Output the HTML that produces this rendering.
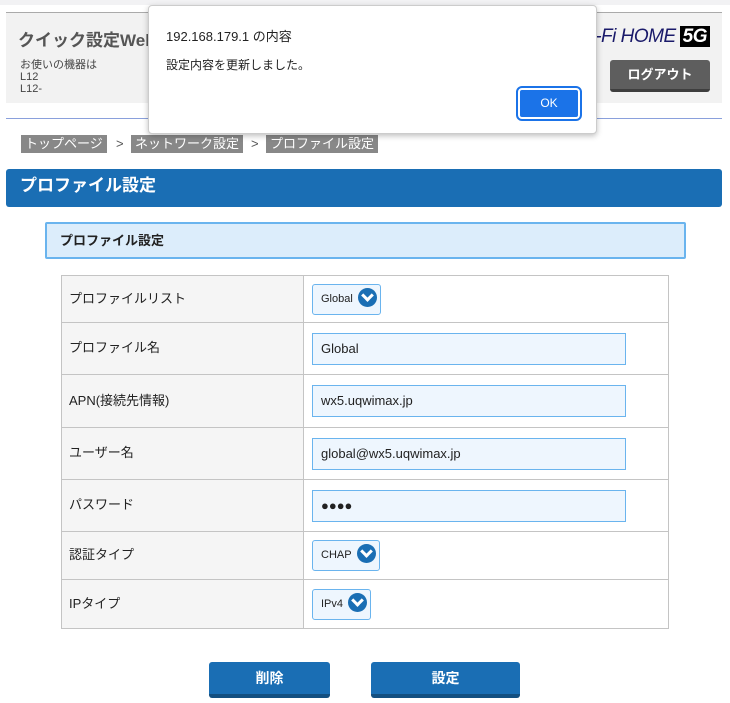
<!DOCTYPE html>
<html><head><meta charset="utf-8"><style>
*{box-sizing:border-box;margin:0;padding:0}
body{width:730px;height:703px;overflow:hidden;background:#fff;font-family:"Liberation Sans","Noto Sans CJK JP",sans-serif;position:relative;color:#222}
.top{position:absolute;left:0;top:0;width:730px;height:5px;background:#f2f2f4}
.hdr{position:absolute;left:6px;top:12px;width:716px;height:91px;background:#f2f2f2;border-top:1px solid #aaa}
.hdr .t{position:absolute;left:12px;top:13px;font-size:17px;font-weight:bold;color:#555}
.hdr .s{position:absolute;left:14px;top:46px;font-size:11px;line-height:12px;color:#444}
.logo{position:absolute;right:12px;top:13px;font-size:19px;font-style:italic;color:#1a1a6a;letter-spacing:-0.5px;white-space:nowrap}
.logo b{background:#000;color:#fff;padding:0 3px;margin-left:4px}
.lo{position:absolute;left:604px;top:47px;width:100px;height:32px;background:#5e5e5e;border-bottom:3px solid #3e3e3e;border-radius:3px;color:#fff;font-size:13px;font-weight:bold;text-align:center;line-height:30px}
.bl{position:absolute;left:6px;top:118px;width:716px;height:1px;background:#8aa0dc}
.bc{position:absolute;top:135px;height:18px;background:#888;color:#fff;font-size:13px;line-height:18px;padding:0 4px}
.gt{position:absolute;top:135px;font-size:13px;line-height:18px;color:#555}
.ttl{position:absolute;left:6px;top:169px;width:716px;height:38px;background:#1a6eb4;border-radius:3px;color:#fff;font-size:17px;font-weight:bold;line-height:34px;padding-left:14px}
.sec{position:absolute;left:45px;top:222px;width:641px;height:37px;background:#dcedfb;border:2px solid #6ab4ee;border-radius:2px;font-size:13px;font-weight:bold;line-height:33px;padding-left:13px}
table{position:absolute;left:61px;top:275px;width:608px;border-collapse:collapse}
td{border:1px solid #c4c4c4;font-size:13px;vertical-align:middle}
td.l{width:242px;background:#f5f5f5;padding:0 0 4px 7px}
td.r{padding-left:8px}
.in{width:314px;height:32px;background:#eef6fe;border:1px solid #6ab4ee;font-size:13px;line-height:30px;padding-left:8px}
.sel{display:inline-block;height:31px;background:#eef6fe;border:1px solid #6ab4ee;border-radius:3px;font-size:11px;line-height:29px;padding:0 3px 0 8px}
.sel i{display:inline-block;width:19px;height:19px;border-radius:50%;background:#1a6eb4;vertical-align:middle;margin-left:5px;margin-top:-3px;position:relative}
.sel i:after{content:"";position:absolute;left:5px;top:3px;width:6px;height:6px;border-right:3px solid #fff;border-bottom:3px solid #fff;transform:rotate(45deg)}
.btn{position:absolute;top:662px;height:36px;background:#1a6eb4;border-bottom:4px solid #134f80;border-radius:3px;color:#fff;font-weight:bold;font-size:14px;text-align:center;line-height:32px}
.dlg{position:absolute;left:148px;top:5px;width:449px;height:129px;background:#fff;border:1px solid #ccc;border-radius:4px;box-shadow:0 2px 6px rgba(0,0,0,.25)}
.dlg .a{position:absolute;left:17px;top:20px;font-size:13px}
.dlg .b{position:absolute;left:17px;top:50px;font-size:12px}
.ok{position:absolute;left:369px;top:82px;width:62px;height:31px;background:#1b73e8;border:2px solid #fff;outline:2px solid #1b73e8;border-radius:4px;color:#fff;font-size:12px;text-align:center;line-height:27px}
</style></head><body>
<div class="top"></div>
<div class="hdr"><div class="t">クイック設定Web</div><div class="s">お使いの機器は<br>L12<br>L12-</div>
<div class="logo">Speed Wi-Fi HOME<b>5G</b></div><div class="lo">ログアウト</div></div>
<div class="bl"></div>
<div class="bc" style="left:21px">トップページ</div><div class="gt" style="left:116px">&gt;</div>
<div class="bc" style="left:131px">ネットワーク設定</div><div class="gt" style="left:251px">&gt;</div>
<div class="bc" style="left:266px">プロファイル設定</div>
<div class="ttl">プロファイル設定</div>
<div class="sec">プロファイル設定</div>
<table>
<tr style="height:47px"><td class="l">プロファイルリスト</td><td class="r"><span class="sel">Global<i></i></span></td></tr>
<tr style="height:52px"><td class="l">プロファイル名</td><td class="r"><div class="in">Global</div></td></tr>
<tr style="height:53px"><td class="l">APN(接続先情報)</td><td class="r"><div class="in">wx5.uqwimax.jp</div></td></tr>
<tr style="height:52px"><td class="l">ユーザー名</td><td class="r"><div class="in">global@wx5.uqwimax.jp</div></td></tr>
<tr style="height:52px"><td class="l">パスワード</td><td class="r"><div class="in">●●●●</div></td></tr>
<tr style="height:48px"><td class="l">認証タイプ</td><td class="r"><span class="sel">CHAP<i></i></span></td></tr>
<tr style="height:49px"><td class="l">IPタイプ</td><td class="r"><span class="sel">IPv4<i></i></span></td></tr>
</table>
<div class="btn" style="left:209px;width:121px">削除</div>
<div class="btn" style="left:371px;width:149px">設定</div>
<div class="dlg"><div class="a">192.168.179.1 の内容</div><div class="b">設定内容を更新しました。</div><div class="ok">OK</div></div>
</body></html>
